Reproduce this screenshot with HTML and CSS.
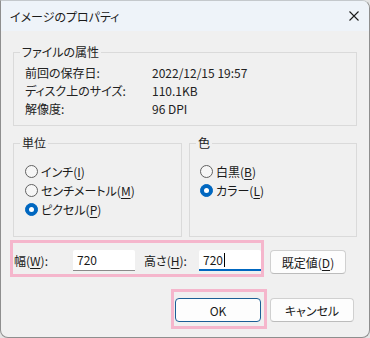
FILE: index.html
```html
<!DOCTYPE html>
<html>
    <head>
        <meta charset="utf-8" />
        <title>イメージのプロパティ</title>
        <link rel="stylesheet" href="styles.css">
    </head>

    <body>
        <div class="window">
            <div class="titlebar">
                <span class="title">イメージのプロパティ</span>
                <svg class="close" width="10" height="10" viewBox="0 0 10 10">
                    <path d="M0.5 0.5 L9.5 9.5 M9.5 0.5 L0.5 9.5" stroke="#1b1b1b" stroke-width="1.1" fill="none" />
                </svg>
            </div>
            <div class="content">
                <fieldset class="group">
                    <legend>ファイルの属性</legend>
                    <div class="props">
                        <span>前回の保存日:</span><span class="val">2022/12/15 19:57</span>
                        <span>ディスク上のサイズ:</span><span class="val">110.1KB</span>
                        <span>解像度:</span><span class="val">96 DPI</span>
                    </div>
                </fieldset>

                <div class="options">
                    <fieldset class="group">
                        <legend>単位</legend>
                        <div class="radios">
                            <div class="radio"><span class="dot"></span>インチ(<u>I</u>)</div>
                            <div class="radio"><span class="dot"></span>センチメートル(<u>M</u>)</div>
                            <div class="radio on"><span class="dot"></span>ピクセル(<u>P</u>)</div>
                        </div>
                    </fieldset>
                    <fieldset class="group">
                        <legend>色</legend>
                        <div class="radios right">
                            <div class="radio"><span class="dot"></span>白黒(<u>B</u>)</div>
                            <div class="radio on"><span class="dot"></span>カラー(<u>L</u>)</div>
                        </div>
                    </fieldset>
                </div>

                <div class="size-row">
                    <div class="mark size-fields">
                        <span class="lbl w">幅(<u>W</u>):</span>
                        <span class="input">720</span>
                        <span class="lbl h">高さ(<u>H</u>):</span>
                        <span class="input focus">720<span class="caret"></span></span>
                    </div>
                    <button class="btn reset">既定値(<u>D</u>)</button>
                </div>

                <div class="actions">
                    <div class="mark ok-wrap">
                        <button class="btn ok">OK</button>
                    </div>
                    <button class="btn cancel">キャンセル</button>
                </div>
            </div>
        </div>
    </body>
</html>
```

FILE: styles.css
```css
* {
    margin: 0;
    padding: 0;
    box-sizing: border-box;
}
body {
    background: #e4e4e4;
    font-family: "Noto Sans CJK JP", "Noto Sans", sans-serif;
    font-size: 12px;
    font-feature-settings: "palt";
    color: #1a1a1a;
}
u {
    text-decoration: underline;
    text-underline-offset: 2px;
}

.window {
    width: 370px;
    height: 338px;
    background: #f0f0f0;
    border: 1px solid #8e8e8e;
    border-top-color: #c4c8cc;
    border-radius: 0 8px 8px 8px;
    overflow: hidden;
}
.titlebar {
    height: 30px;
    display: flex;
    align-items: center;
    justify-content: space-between;
    padding: 0 10px 0 9px;
    background: #eef3f9;
}
.title {
    color: #1a1a1a;
}
.close {
    display: block;
}

.content {
    padding: 0 12px;
}
.group {
    border: 1px solid #dadada;
    min-width: 0;
}
.group legend {
    margin-left: 6px;
    padding: 0 2px;
    line-height: 16px;
    color: #222;
}
.content > .group {
    margin-top: 13px;
}
.props {
    display: grid;
    grid-template-columns: 127px 1fr;
    line-height: 18px;
    padding: 4px 0 7px 11px;
    color: #222;
}

.options {
    display: grid;
    grid-template-columns: 169px 1fr;
    gap: 7px;
    margin-top: 9px;
}
.radios {
    padding: 11px 0 17px 11px;
}
.radios.right {
    padding-left: 10px;
}
.radio {
    display: flex;
    align-items: center;
    height: 19px;
}
.dot {
    width: 13px;
    height: 13px;
    border-radius: 50%;
    border: 1px solid #616161;
    background: #f6f6f6;
    margin-right: 3px;
    display: flex;
    align-items: center;
    justify-content: center;
}
.radio.on .dot {
    border-color: #0067c0;
    background: #0067c0;
}
.radio.on .dot::after {
    content: "";
    width: 5px;
    height: 5px;
    border-radius: 50%;
    background: #fff;
}

.mark {
    border: 3px solid #f5b6cc;
}
.size-row {
    display: flex;
    align-items: flex-start;
    margin-top: 3px;
}
.size-fields {
    display: flex;
    margin-left: -3px;
    padding: 7px 0 3px 1px;
}
.lbl {
    line-height: 21px;
}
.lbl.w {
    width: 59px;
}
.lbl.h {
    width: 55px;
    margin-left: 9px;
}
.input {
    width: 62px;
    height: 21px;
    line-height: 20px;
    padding-left: 4px;
    background: #fff;
    border-bottom: 1px solid #8a8a8a;
    border-radius: 2px 2px 0 0;
    display: flex;
    align-items: center;
}
.input.focus {
    border-bottom: 2px solid #0067c0;
}
.caret {
    width: 1px;
    height: 14px;
    background: #000;
    margin-left: 1px;
}

.btn {
    height: 24px;
    font: inherit;
    font-feature-settings: "palt";
    color: #1a1a1a;
    background: #fdfdfd;
    border: 1px solid #d0d0d0;
    border-bottom-color: #bcbcbc;
    border-radius: 4px;
}
.reset {
    width: 76px;
    margin: 10px 0 0 6px;
}
.actions {
    display: flex;
    justify-content: flex-end;
    align-items: flex-start;
    margin-top: 12px;
    padding-right: 3px;
}
.ok-wrap {
    padding: 6px 3px 4px 1px;
}
.ok {
    width: 86px;
    border: 1px solid #1c5f96;
}
.cancel {
    width: 84px;
    margin: 9px 0 0 3px;
}
```
